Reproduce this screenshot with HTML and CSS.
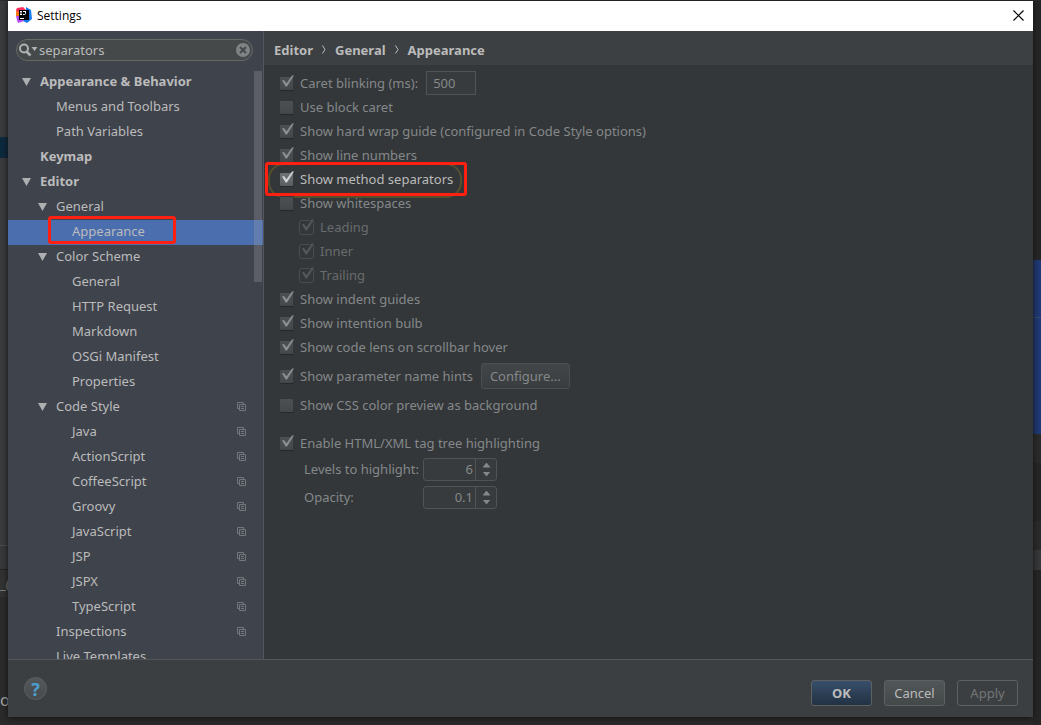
FILE: index.html
```html
<!DOCTYPE html>
<html lang="en">
<head>
    <meta charset="UTF-8">
    <meta name="viewport" content="width=device-width, initial-scale=1.0">
    <title>Settings</title>
    <link rel="stylesheet" href="styles.css">
</head>

<body>
    <svg class="sprite" width="0" height="0" aria-hidden="true">
        <symbol id="icon-copy" viewBox="0 0 9 9">
            <path d="M2 6.5H.5V.5h6V2M2.5 2.5h6v6h-6zM4 4.5h3M4 6.5h3" fill="none" stroke="currentColor" />
        </symbol>
    </svg>

    <!-- slivers of the IDE window behind the dialog -->
    <div class="backdrop backdrop-left" aria-hidden="true">
        <div class="panel"></div>
        <div class="selected"></div>
        <div class="panel-long"></div>
        <div class="tabs"></div>
        <div class="tab-text">_(</div>
        <div class="editor-text">oc</div>
    </div>
    <div class="backdrop backdrop-right" aria-hidden="true">
        <div class="gap"></div>
        <div class="block-top"></div>
        <div class="block-bottom"></div>
        <div class="line"></div>
        <div class="dark"></div>
        <div class="line"></div>
        <div class="bar"></div>
    </div>

    <div class="dialog">
        <header class="titlebar">
            <svg class="logo" width="16" height="16" viewBox="0 0 16 16">
                <path d="M1 1 7 0l3 3-4 7-6-1 1-3-1-3z" fill="#fe315d" />
                <path d="M10 0l5 3 1 9-5 4-4-2 3-7z" fill="#1679ef" />
                <path d="M0 9l4-2 4 7-6 2-1-3z" fill="#b74af7" />
                <path d="M0 4l3 1v4H0z" fill="#f97a12" />
                <path d="M3 3h10v10H3z" fill="#000" />
                <path d="M4 4.500h2M5 4.500v3M4 7.500h2M7 4.500h3M9.500 4.500v2q0 1-1 1H7M4 11.500h4" fill="none" stroke="#fff" />
            </svg>
            <h1>Settings</h1>
            <button class="close" aria-label="Close">
                <svg width="11" height="11" viewBox="0 0 11 11"><path d="M.5.5l10 10M10.500.5l-10 10" stroke="#000" stroke-width="1.200" /></svg>
            </button>
        </header>

        <div class="content">
            <aside class="sidebar">
                <div class="search">
                    <svg width="19" height="14" viewBox="0 0 19 14">
                        <circle cx="5" cy="5.500" r="4" fill="none" stroke="#afb1b3" stroke-width="2" />
                        <path d="M7.500 8.500l4 4" stroke="#afb1b3" stroke-width="2.500" />
                        <path d="M12.500 4h6l-3 4z" fill="#afb1b3" />
                    </svg>
                    <input type="text" value="separators" aria-label="Search settings">
                    <button aria-label="Clear">
                        <svg width="14" height="14" viewBox="0 0 14 14">
                            <circle cx="7" cy="7" r="7" fill="#7f8385" />
                            <path d="M4 4l6 6M10 4l-6 6" stroke="#45494a" stroke-width="2" />
                        </svg>
                    </button>
                </div>
                <nav class="tree">
                    <a href="#" class="level-0 open">Appearance &amp; Behavior</a>
                    <a href="#" class="level-1">Menus and Toolbars</a>
                    <a href="#" class="level-1">Path Variables</a>
                    <a href="#" class="level-0">Keymap</a>
                    <a href="#" class="level-0 open">Editor</a>
                    <a href="#" class="level-1 open">General</a>
                    <a href="#" class="level-2 current">Appearance<span class="mark"></span></a>
                    <a href="#" class="level-1 open">Color Scheme</a>
                    <a href="#" class="level-2">General</a>
                    <a href="#" class="level-2">HTTP Request</a>
                    <a href="#" class="level-2">Markdown</a>
                    <a href="#" class="level-2">OSGi Manifest</a>
                    <a href="#" class="level-2">Properties</a>
                    <a href="#" class="level-1 open">Code Style<svg><use href="#icon-copy" /></svg></a>
                    <a href="#" class="level-2">Java<svg><use href="#icon-copy" /></svg></a>
                    <a href="#" class="level-2">ActionScript<svg><use href="#icon-copy" /></svg></a>
                    <a href="#" class="level-2">CoffeeScript<svg><use href="#icon-copy" /></svg></a>
                    <a href="#" class="level-2">Groovy<svg><use href="#icon-copy" /></svg></a>
                    <a href="#" class="level-2">JavaScript<svg><use href="#icon-copy" /></svg></a>
                    <a href="#" class="level-2">JSP<svg><use href="#icon-copy" /></svg></a>
                    <a href="#" class="level-2">JSPX<svg><use href="#icon-copy" /></svg></a>
                    <a href="#" class="level-2">TypeScript<svg><use href="#icon-copy" /></svg></a>
                    <a href="#" class="level-1">Inspections<svg><use href="#icon-copy" /></svg></a>
                    <a href="#" class="level-1">Live Templates</a>
                    <div class="scroll-thumb"></div>
                </nav>
            </aside>

            <main>
                <div class="breadcrumbs">
                    <span>Editor</span>
                    <svg width="4" height="9" viewBox="0 0 4 9"><path d="M.5.5l2.500 4-2.500 4" fill="none" stroke="currentColor" /></svg>
                    <span>General</span>
                    <svg width="4" height="9" viewBox="0 0 4 9"><path d="M.5.5l2.500 4-2.500 4" fill="none" stroke="currentColor" /></svg>
                    <span>Appearance</span>
                </div>
                <form class="options">
                    <div class="row">
                        <label><input type="checkbox" checked>Caret blinking (ms):</label>
                        <input class="delay" type="text" value="500" aria-label="Caret blinking delay">
                    </div>
                    <div class="row"><label><input type="checkbox">Use block caret</label></div>
                    <div class="row"><label><input type="checkbox" checked>Show hard wrap guide (configured in Code Style options)</label></div>
                    <div class="row"><label><input type="checkbox" checked>Show line numbers</label></div>
                    <div class="row found">
                        <label><input type="checkbox" checked>Show method separators</label>
                        <span class="mark"></span>
                    </div>
                    <div class="row"><label><input type="checkbox">Show whitespaces</label></div>
                    <div class="row nested"><label><input type="checkbox" checked disabled>Leading</label></div>
                    <div class="row nested"><label><input type="checkbox" checked disabled>Inner</label></div>
                    <div class="row nested"><label><input type="checkbox" checked disabled>Trailing</label></div>
                    <div class="row"><label><input type="checkbox" checked>Show indent guides</label></div>
                    <div class="row"><label><input type="checkbox" checked>Show intention bulb</label></div>
                    <div class="row"><label><input type="checkbox" checked>Show code lens on scrollbar hover</label></div>
                    <div class="row hints">
                        <label><input type="checkbox" checked>Show parameter name hints</label>
                        <button type="button">Configure...</button>
                    </div>
                    <div class="row"><label><input type="checkbox">Show CSS color preview as background</label></div>
                    <div class="row group"><label><input type="checkbox" checked>Enable HTML/XML tag tree highlighting</label></div>
                    <div class="row number">
                        <label for="levels">Levels to highlight:</label>
                        <div class="spinner">
                            <input id="levels" type="text" value="6">
                            <div class="arrows">
                                <button type="button" class="up" aria-label="More levels"></button>
                                <button type="button" class="down" aria-label="Fewer levels"></button>
                            </div>
                        </div>
                    </div>
                    <div class="row number">
                        <label for="opacity">Opacity:</label>
                        <div class="spinner">
                            <input id="opacity" type="text" value="0.1">
                            <div class="arrows">
                                <button type="button" class="up" aria-label="Increase opacity"></button>
                                <button type="button" class="down" aria-label="Decrease opacity"></button>
                            </div>
                        </div>
                    </div>
                </form>
            </main>
        </div>

        <footer>
            <button class="help" aria-label="Help">?</button>
            <button class="action primary">OK</button>
            <button class="action">Cancel</button>
            <button class="action" disabled>Apply</button>
        </footer>
    </div>
</body>

</html>
```
FILE: styles.css
```css
* {
    box-sizing: border-box;
}

html, body {
    height: 100%;
    margin: 0;
}

body {
    display: grid;
    grid-template-columns: 8px minmax(0, 1fr) 8px;
    padding-top: 1px;
    overflow: hidden;
    background: #2b2b2b;
    color: #bbbbbb;
    font-family: "Noto Sans", sans-serif;
    font-size: 13px;
    line-height: 18px;
}

button, input {
    margin: 0;
    padding: 0;
    border: none;
    background: none;
    color: inherit;
    font: inherit;
}

svg {
    flex: none;
}

.sprite {
    position: absolute;
}

/* backdrop */
.backdrop {
    grid-row: 1;
    display: flex;
    flex-direction: column;
    overflow: hidden;
    white-space: nowrap;
}

.backdrop-left { grid-column: 1; }
.backdrop-right { grid-column: 3; background: #262626; }
.panel { height: 136px; background: #393b3c; }
.selected { height: 21px; background: #0d293e; }
.panel-long { height: 387px; background: #393b3c; }
.tabs { height: 25px; border-top: 1px solid #4a4c4d; border-bottom: 1px solid #222222; background: #37393a; }
.tab-text { height: 27px; padding-top: 5px; background: #323232; color: #8a8a8a; }
.editor-text { padding-top: 94px; color: #a9a9a9; font-size: 16px; }
.gap { height: 259px; }
.block-top { height: 58px; border-bottom: 1px solid #3a4a70; background: #1f3a75; }
.block-bottom { height: 116px; background: #1f3a75; }
.line { height: 29px; background: #2b2b2b; }
.dark { height: 58px; }
.bar { height: 20px; background: #37393a; }

/* dialog */
.dialog {
    grid-column: 2;
    grid-row: 1;
    display: flex;
    flex-direction: column;
    min-height: 0;
    margin-bottom: 8px;
    background: #3c3f41;
    box-shadow: 0 1px 6px #111111;
}

.titlebar {
    display: flex;
    align-items: center;
    height: 30px;
    padding: 0 9px 2px 8px;
    background: #ffffff;
    color: #000000;
}

.titlebar h1 {
    flex: 1;
    margin: 0 0 0 5px;
    padding-top: 2px;
    font-family: "Open Sans", sans-serif;
    font-size: 12px;
    font-weight: normal;
}

.close {
    display: flex;
}

.content {
    flex: 1;
    display: grid;
    grid-template-columns: 256px minmax(0, 1fr);
    min-height: 0;
}

/* sidebar */
.sidebar {
    display: flex;
    flex-direction: column;
    min-height: 0;
    border-right: 1px solid #54575a;
    background: #3f434c;
}

.search {
    display: flex;
    align-items: center;
    height: 22px;
    margin: 8px 10px 9px 8px;
    padding: 0 2px;
    border: 1px solid #656967;
    border-radius: 11px;
    background: #45494a;
}

.search input {
    flex: 1;
    min-width: 0;
    margin-left: 1px;
    outline: none;
}

.search button {
    display: flex;
}

.tree {
    position: relative;
    flex: 1;
    min-height: 0;
    overflow: hidden;
}

.tree a {
    position: relative;
    display: flex;
    align-items: center;
    height: 25px;
    padding-right: 17px;
    padding-bottom: 4px;
    color: inherit;
    text-decoration: none;
}

.tree svg {
    width: 9px;
    height: 9px;
    margin-top: 2px;
    margin-left: auto;
    color: #74777c;
}

.tree .level-0 { padding-left: 32px; font-weight: bold; }
.tree .level-1 { padding-left: 48px; }
.tree .level-2 { padding-left: 64px; }
.tree .current { background: #4b6eaf; }

.tree .open::before {
    content: "";
    width: 9px;
    height: 8px;
    margin: 3px 9px 0 -18px;
    background: #adafb1;
    clip-path: polygon(0 0, 100% 0, 50% 100%);
}

.scroll-thumb {
    position: absolute;
    top: 1px;
    right: 1px;
    width: 8px;
    height: 211px;
    background: rgba(166, 166, 176, 0.28);
}

.mark {
    position: absolute;
    border: 3px solid #ff2012;
    border-radius: 3px;
}

.tree .mark {
    top: -4px;
    left: 40px;
    width: 128px;
    height: 28px;
}

/* settings page */
main {
    background: #333739;
}

.breadcrumbs {
    display: flex;
    align-items: center;
    gap: 9px;
    height: 34px;
    padding: 3px 10px 0;
    background: #3c4042;
    font-weight: bold;
}

.options {
    padding: 6px 15px;
    color: #85888a;
}

.row {
    position: relative;
    display: flex;
    align-items: center;
    height: 24px;
}

.row label {
    display: flex;
    align-items: center;
}

.nested {
    padding-left: 20px;
    color: #686b6d;
}

.hints { height: 34px; }
.group { height: 38px; padding-top: 14px; }
.number { height: 28px; padding-left: 25px; }
.number label { width: 119px; }

input[type="checkbox"] {
    appearance: none;
    position: relative;
    width: 15px;
    height: 15px;
    margin-right: 6px;
    border: 1px solid #333739;
    border-bottom-color: #26292b;
    border-radius: 2px;
    background: linear-gradient(#4d5052, #45484a);
    background-clip: padding-box;
}

input[type="checkbox"]:checked::after {
    content: "";
    position: absolute;
    top: -2px;
    left: 1px;
    width: 13px;
    height: 13px;
    background: #8b8e8f;
    clip-path: polygon(8% 46%, 23% 42%, 42% 67%, 85% 8%, 100% 8%, 46% 92%, 35% 92%);
}

input[type="checkbox"]:disabled {
    border-color: #484c4e;
    background: none;
}

input[type="checkbox"]:disabled::after {
    background: #55585a;
}

.found {
    color: #bbbbbb;
}

.found input[type="checkbox"] {
    background: linear-gradient(#707375, #5b5e60);
    background-clip: padding-box;
}

.found input[type="checkbox"]::after {
    background: #d0d2d3;
}

.found::before {
    content: "";
    position: absolute;
    top: -4px;
    left: -11px;
    width: 190px;
    height: 31px;
    border: 2px solid #57502f;
    border-radius: 16px;
}

.found label {
    position: relative;
}

.found .mark {
    top: -5px;
    left: -14px;
    width: 202px;
    height: 34px;
}

.delay {
    width: 50px;
    height: 24px;
    margin-left: 8px;
    padding: 0 6px;
    border: 1px solid #505456;
    background: #373b3d;
}

.hints button {
    height: 26px;
    margin-left: 8px;
    padding: 0 8px;
    border: 1px solid #4b4f51;
    border-radius: 3px;
    background: linear-gradient(#424648, #393d3f);
}

.spinner {
    display: flex;
    width: 74px;
    height: 23px;
    border: 1px solid #505456;
    border-radius: 3px;
    background: #373b3d;
}

.spinner input {
    flex: 1;
    min-width: 0;
    padding-right: 2px;
    text-align: right;
}

.arrows {
    display: flex;
    flex-direction: column;
    align-items: center;
    justify-content: center;
    gap: 4px;
    width: 21px;
    padding-top: 1px;
    padding-left: 1px;
    border-left: 1px solid #505456;
}

.arrows button {
    width: 8px;
    height: 5px;
    background: #85888a;
}

.up { clip-path: polygon(50% 0, 100% 100%, 0 100%); }
.down { clip-path: polygon(0 0, 100% 0, 50% 100%); }

/* buttons */
footer {
    display: flex;
    align-items: center;
    gap: 12px;
    height: 58px;
    padding: 9px 15px 0 16px;
    border-top: 1px solid #54575a;
}

.help {
    width: 23px;
    height: 23px;
    margin: 0 auto 9px 0;
    border: 1px solid #5c6062;
    border-radius: 50%;
    background: linear-gradient(#53575a, #474b4d);
    color: #4a9fce;
    font-size: 18px;
    font-weight: bold;
    line-height: 20px;
}

.action {
    width: 61px;
    height: 26px;
    padding-bottom: 1px;
    border: 1px solid #5e6162;
    border-radius: 3px;
    background: linear-gradient(#515658, #434849);
}

.primary {
    background: linear-gradient(#384f6b, #233143);
    font-weight: bold;
}

.action:disabled {
    background: none;
    color: #747677;
}
```
